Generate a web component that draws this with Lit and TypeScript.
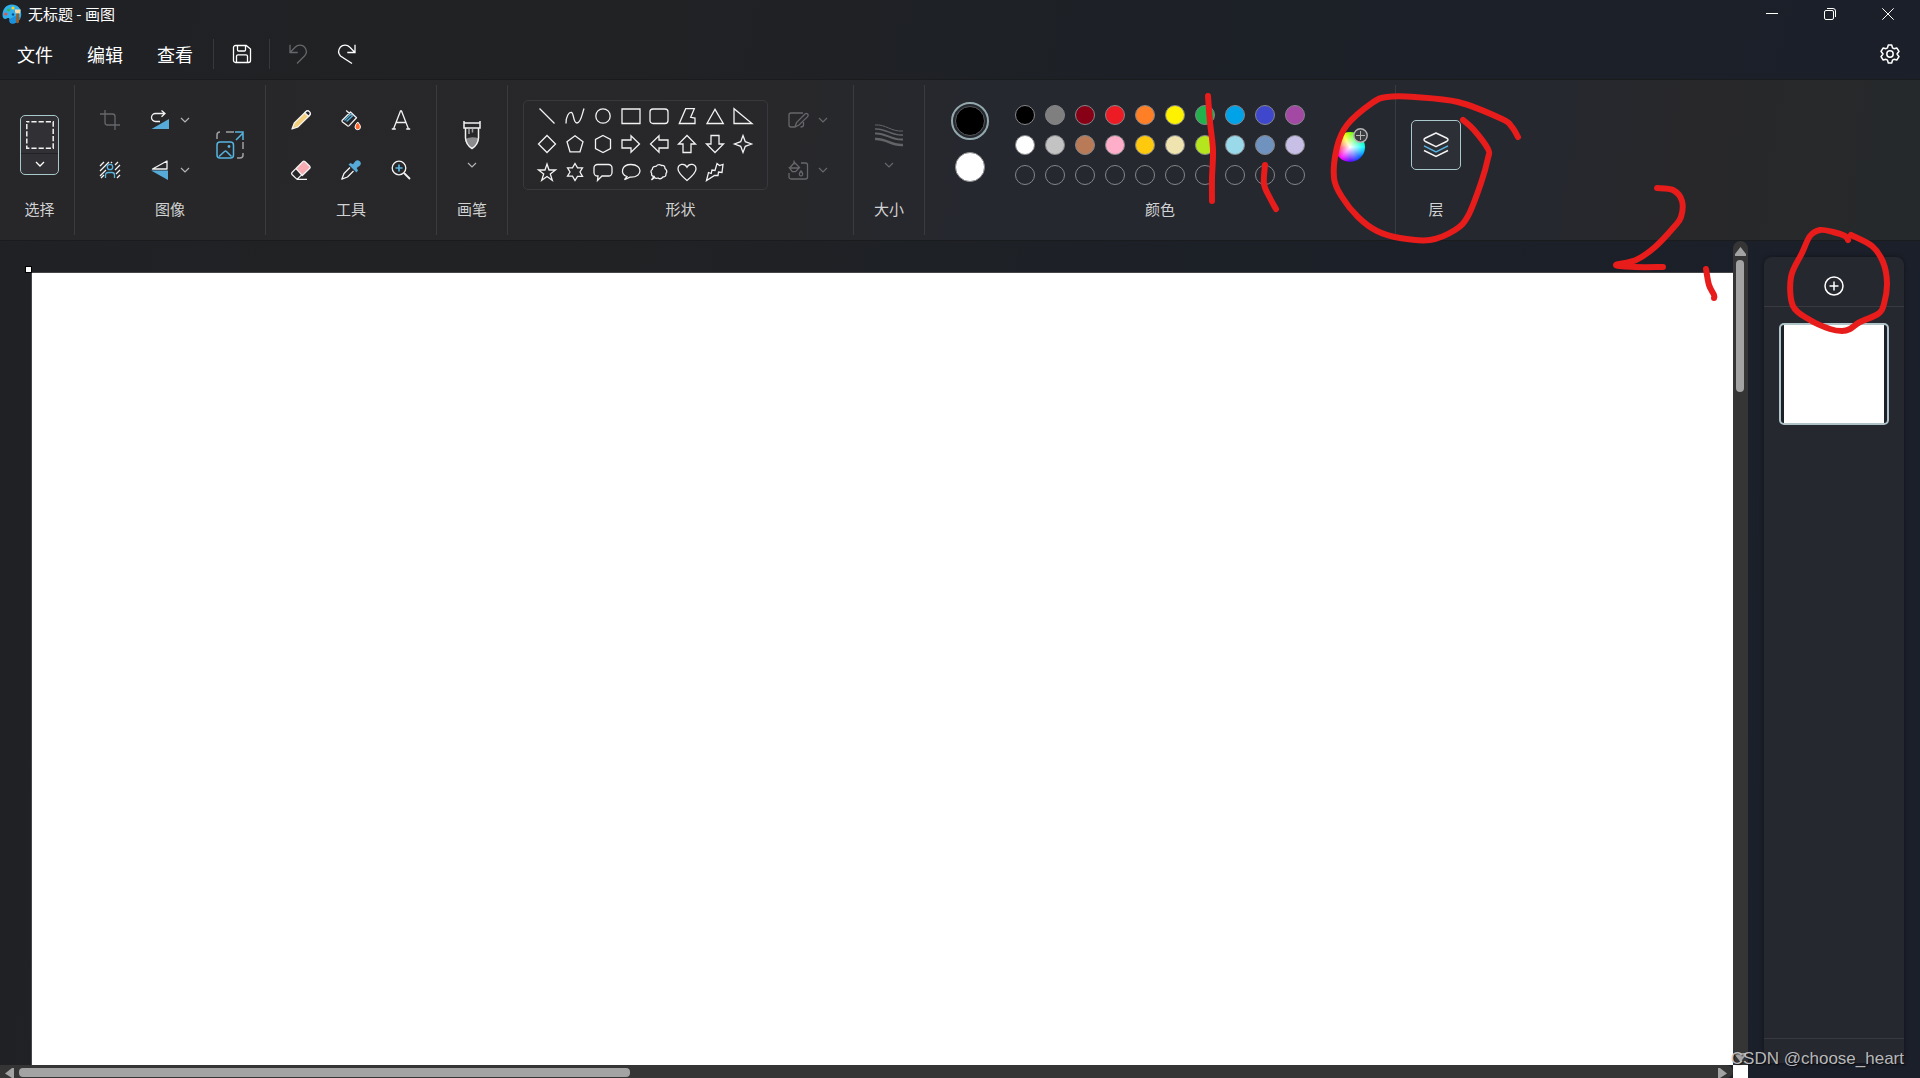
import { LitElement, html, svg, css, SVGTemplateResult } from "lit";
import { customElement } from "lit/decorators.js";
import { styleMap } from "lit/directives/style-map.js";

type Point = [number, number];

const ICONS: Record<string, SVGTemplateResult> = {
  save: svg`<path d="M4 1.5h10.200l4.300 3.500V16.500a2 2 0 0 1-2 2h-13a2 2 0 0 1-2-2V3.500a2 2 0 0 1 2-2zM5.500 1.800v4.200q0 1 1 1h6q1 0 1-1V1.800M4.500 18.300v-6q0-1.500 1.500-1.500h8q1.500 0 1.500 1.500v6"/>`,
  undo: svg`<path d="M2 .8v7.700h7.700M2.300 8.200l4.800-4.900a6.500 6.500 0 0 1 9.700 0q3.400 4.400-.3 8.700L9 19.500"/>`,
  redo: svg`<path d="M18 .8v7.700h-7.700M17.700 8.200l-4.800-4.900a6.500 6.500 0 0 0-9.700 0q-3.400 4.400.3 8.700L15 19.500"/>`,
  gear: svg`<path d="M8.300 1h3.400l.8 2.800 1.500.9 2.800-.7 2.200 3.300-2 2.700 2 2.700-2.200 3.300-2.800-.7-1.500.9-.8 2.800H8.300l-.8-2.800-1.500-.9-2.800.7L1 12.700 3 10 1 7.300 3.200 4l2.800.7 1.500-.9z" stroke-linejoin="round"/><circle cx="10" cy="10" r="3.200"/>`,
  crop: svg`<path d="M5 0v12.500a2.500 2.500 0 0 0 2.500 2.500H20M0 4h12.500A2.500 2.500 0 0 1 15 6.500V20"/>`,
  rotate: svg`<path d="M10 11.500H5.500a4 4 0 0 1 0-8h9M11.500.5l3.500 3-3.500 3.200"/><path class="blue-fill" d="M1.500 19L19 9v10z"/>`,
  removebg: svg`<path d="M0 6l4-4M0 11L9 2M0 16L6 10M1 18l3-3M11 3l1-1M15 5l3-3M15 10l5-5M16 14l4-4M17 18l3-3"/><circle class="blue" cx="10" cy="7" r="2.700"/><path class="blue" d="M5.500 18v-3a2.500 2.500 0 0 1 2.500-2.500h4a2.500 2.500 0 0 1 2.500 2.500v3"/>`,
  flip: svg`<path d="M2.500 9L17 1v8z" stroke-linejoin="round"/><path class="blue-fill" d="M1 10.500h17V20z"/>`,
  pencil: svg`<path fill="#f3cf7c" d="M1 19l2.300-6L14.500 2a2.700 2.700 0 0 1 3.800 3.800L7 16.900z" stroke-linejoin="round"/><path fill="#27272a" d="M13.800 2.700l1-1a2.500 2.500 0 0 1 3.700 3.600l-1 1z"/>`,
  bucket: svg`<path d="M1 10.500L9.500 2l6 5.800-7.300 7.800q-1 1-2 0L1.500 12q-.8-.8-.5-1.500zM5.200.5l5.300 4.700" stroke-linejoin="round"/><path class="blue" d="M3.500 10.500l7-7M5.500 11.500l6.500-6"/><path fill="#ff6a2f" stroke="#fff" stroke-width="1" d="M16.700 12q3 3.300 2.700 5a2.700 2.700 0 0 1-5.400 0q0-2 2.700-5z"/>`,
  text: svg`<path d="M2.500 19L9.500 1h1l7 18M5 12.500h10M.8 19h4M15.200 19h4"/>`,
  eraser: svg`<path fill="#f6acb2" d="M5 8.500l7-7q.8-.8 1.800 0l5 4.800q.8 1 0 1.900l-7.500 7.300z" stroke-linejoin="round"/><path d="M4.800 8.600L1 12.500q-.8 1 0 2l4 3.900q1 1 2 0l4.200-4M5.500 19.300h10.500" stroke-linejoin="round"/>`,
  dropper: svg`<path d="M9 7.500l-6 6-2.200 5.700L6.500 17l6-6" stroke-linejoin="round"/><path class="blue-fill" d="M7.500 4.500l2-1.500 2.500 1.300L14.500 1a3.200 3.200 0 0 1 4.500 4.500L15.700 8l1.300 2.500-1.500 2z"/>`,
  zoom: svg`<circle cx="8" cy="8" r="6.800"/><path d="M13 13l6 6" stroke-width="1.800"/><path class="blue" d="M8 4.500v7M4.500 8h7" stroke-width="1.700"/>`,
  outline: svg`<path d="M15 3H3a2 2 0 0 0-2 2v10a2 2 0 0 0 2 2h4l1.500-4.500L17 4a1.800 1.800 0 0 1 2.600 2.600L11 15l-4 2M12.500 17q3 0 3-2v-3"/>`,
  fill: svg`<path d="M13 3h4.500a2 2 0 0 1 2 2v12a2 2 0 0 1-2 2H3a2 2 0 0 1-2-2v-4M1.500 8L6.500 2.500l5 5-4 4.200H4.300L1.500 8h10M6 .5v4M13 11q2.200 2.500 1.500 4a1.700 1.700 0 0 1-3 0Q10.800 13.500 13 11z"/>`,
  plus: svg`<circle cx="10" cy="10" r="9"/><path d="M10 5.500v9M5.500 10h9"/>`,
  chevron: svg`<path d="M6 8l4 4 4-4"/>`,
};

const SHAPES: [string, SVGTemplateResult][] = [
  ["直线", svg`<path d="M2.500 2.500l15 15"/>`],
  ["曲线", svg`<path d="M1 17.500C1 10 4 6 6.500 6.500S8 17 12 17 17 8 19 2.500"/>`],
  ["椭圆形", svg`<circle cx="10" cy="10" r="7.200"/>`],
  ["矩形", svg`<path d="M1 3h18v14.500H1z"/>`],
  ["圆角矩形", svg`<rect x="1" y="3" width="18" height="14.500" rx="3"/>`],
  ["多边形", svg`<path d="M2.300 17.500L8.700 2.700h8.600l-3.600 8.600 4.300.7v5.500z"/>`],
  ["三角形", svg`<path d="M2 17.500l8-14.200 8.300 14.200z"/>`],
  ["直角三角形", svg`<path d="M1 2.700v14.800h18z"/>`],
  ["菱形", svg`<path d="M10 1.500l8.500 8.500-8.500 8.500L1.500 10z"/>`],
  ["五边形", svg`<path d="M10 1.800l8 6-3 10H5l-3-10z"/>`],
  ["六边形", svg`<path d="M10 1.500l7.500 4v9l-7.500 4-7.500-4v-9z"/>`],
  ["向右箭头", svg`<path d="M1 6h9V1.800l8.500 8.200-8.500 8.300V14H1z"/>`],
  ["向左箭头", svg`<path d="M19 6h-9V1.800L1.500 10l8.500 8.300V14h9z"/>`],
  ["向上箭头", svg`<path d="M6 18.500V10H1.500L10 1.500l8.500 8.500H14v8.500z"/>`],
  ["向下箭头", svg`<path d="M6 1.500V10H1.500l8.500 8.500 8.500-8.500H14V1.500z"/>`],
  ["四角星", svg`<path d="M10 1.500l2.300 6.200 6.200 2.300-6.200 2.300L10 18.500l-2.300-6.200L1.500 10l6.200-2.300z"/>`],
  ["五角星", svg`<path d="M10 2l2 6h6.500l-5.200 4 2 6.300L10 14.500l-5.300 3.800 2-6.300-5.200-4H8z"/>`],
  ["六角星", svg`<path d="M10 1.500l2.500 4.300h5L15 10l2.500 4.300h-5L10 18.500l-2.500-4.300h-5L5 10 2.500 5.800h5z"/>`],
  ["圆角标注", svg`<path d="M4.500 2.500h11a3.500 3.500 0 0 1 3.500 3.500v4.500a3.500 3.500 0 0 1-3.500 3.500H9l-4.500 4.500L5 14h-.5A3.500 3.500 0 0 1 1 10.500V6a3.500 3.500 0 0 1 3.500-3.500z"/>`],
  ["椭圆标注", svg`<path d="M6 14.500C-1 12 0 2.500 10 2.500c12 0 12 12.700 0 12.700H9l-5.500 2.500z"/>`],
  ["云形标注", svg`<path d="M5 14.500q-3-.5-2.300-3Q1 9 3.300 7.500 3.500 4 7 4.300q2.500-3 5.500-.8 3.500-.5 3.500 3 3 2.500 1 5 .3 3.500-3 3.500-2.500 3-5 1-2 1-3.500-.5l-3 2.500z"/>`],
  ["心形", svg`<path d="M10 18.500C4 13.500 1 10.500 1 7c0-5 6.500-6.500 9-1.800C12.500.5 19 2 19 7c0 3.500-3 6.500-9 11.500z"/>`],
  ["闪电", svg`<path d="M12 1.500l2.500 2 3.500-1-1 8-3.500-.5-.5 3.500-3.500 0L1.500 18.500l2-8 2.700 1L7 8l3 .5z"/>`],
];

const PALETTE: string[][] = [
  ["#000000", "#7f7f7f", "#880015", "#ed1c24", "#ff7f27", "#fff200", "#22b14c", "#00a2e8", "#3f48cc", "#a349a4"],
  ["#ffffff", "#c3c3c3", "#b97a57", "#ffaec9", "#ffc90e", "#efe4b0", "#b5e61d", "#99d9ea", "#7092be", "#c8bfe7"],
  Array(10).fill("transparent"),
];

const STROKES: Point[][] = [
  [[1208, 96], [1210, 122], [1213, 150], [1212, 178], [1212, 201]],
  [[1265, 165], [1264, 184], [1270, 198], [1276, 209]],
  [[1463, 120], [1474, 130], [1488, 149], [1488, 158], [1481, 183], [1468, 216], [1455, 230], [1430, 240], [1400, 238], [1377, 231], [1358, 217], [1342, 197], [1334, 178], [1337, 147], [1347, 125], [1372, 103], [1387, 97], [1415, 97], [1458, 102], [1502, 119], [1512, 127], [1518, 137]],
  [[1657, 188], [1673, 190], [1682, 201], [1681, 217], [1674, 227], [1655, 247], [1636, 260], [1616, 265], [1635, 267], [1663, 267]],
  [[1706, 269], [1709, 285], [1714, 295], [1714, 298]],
  [[1848, 240], [1845, 236], [1833, 232], [1820, 230], [1810, 236], [1802, 253], [1791, 277], [1793, 306], [1810, 320], [1830, 329], [1842, 331], [1850, 329], [1860, 322], [1878, 314], [1884, 304], [1887, 283], [1883, 262], [1872, 246], [1851, 235]],
];

/** Runs a smooth cubic curve through the recorded pen points. */
function penPath(p: Point[]): string {
  let d = `M${p[0].join(" ")}`;
  for (let i = 0; i < p.length - 1; i++) {
    const a = p[i - 1] ?? p[i];
    const b = p[i];
    const c = p[i + 1];
    const e = p[i + 2] ?? c;
    d += `C${b[0] + (c[0] - a[0]) / 6} ${b[1] + (c[1] - a[1]) / 6} ${c[0] - (e[0] - b[0]) / 6} ${c[1] - (e[1] - b[1]) / 6} ${c[0]} ${c[1]}`;
  }
  return d;
}

const icon = (body: SVGTemplateResult) => html`<svg class="icon" viewBox="0 0 20 20" aria-hidden="true">${body}</svg>`;
const tool = (name: string, label: string, extra = "") =>
  html`<button class="tool ${extra}" aria-label=${label}>${icon(ICONS[name])}</button>`;
const chevron = (label: string, extra = "") =>
  html`<button class="chevron ${extra}" aria-label=${label}>${icon(ICONS.chevron)}</button>`;

const shared = css`
  * { box-sizing: border-box; }
  button {
    display: flex; align-items: center; justify-content: center;
    padding: 0; border: 0; background: none; color: inherit; font: inherit;
  }
  .icon {
    width: 20px; height: 20px; display: block; flex: none; overflow: visible;
    fill: none; stroke: currentColor; stroke-width: 1.3;
  }
  .blue { stroke: #56b4e0; }
  .blue-fill { fill: #56abd8; stroke: none; }
`;

@customElement("paint-header")
export class PaintHeader extends LitElement {
  static styles = [shared, css`
    :host { display: block; color: #fff; }
    .title { display: flex; align-items: center; height: 28px; padding: 0 3px 0 2px; }
    .logo { width: 20px; height: 20px; }
    .name { flex: 1; margin: 0; padding-left: 6px; font-size: 15px; font-weight: 400; line-height: 28px; }
    .win { width: 58px; height: 28px; }
    .win svg { width: 12px; height: 12px; fill: none; stroke: #fff; stroke-width: 1; }
    .bar { display: flex; align-items: center; height: 52px; padding: 1px 20px 0 0; border-bottom: 1px solid #1a1b1d; }
    .menu { width: 70px; height: 40px; font-size: 18px; }
    .menus { display: flex; padding-right: 3px; }
    .sep { width: 1px; height: 30px; background: #37383b; }
    .quick { width: 55px; height: 40px; }
    .history { display: flex; padding-left: 3px; }
    .act { width: 49px; height: 40px; }
    .off { color: #66676a; }
    .spacer { flex: 1; }
    .gear { width: 20px; height: 20px; }
    .gear .icon { stroke-width: 1.5; }
  `];

  render() {
    return html`
      <div class="title">
        <svg class="logo" viewBox="0 0 20 20" aria-hidden="true">
          <path fill="#2fb0ea" d="M10 .5C3.500.5 0 6 .6 12c.2 3 2.600 3.500 4.200 2.500 1.800-1 3-.5 2.700 1.500-.4 2.500.8 3.600 3 3.500C16 19 19.500 15 19.200 9.500 19 4 15.500.5 10 .5z"/>
          <path fill="#1c8fdd" d="M7.500 15c.3 3 .5 4.500 3 4.500 3 0 6.500-2 8-6L13 12z"/>
          <circle cx="11" cy="4" r="1.500" fill="#ffd21c"/><circle cx="6.500" cy="6" r="1.500" fill="#3bb54a"/>
          <circle cx="3.800" cy="10" r="1.500" fill="#f0503c"/><circle cx="11" cy="10.500" r="1.200" fill="#0b4d92"/>
          <path fill="#f7d9a8" d="M12.700 5.500h6l-.8 4h-4.400z"/><path fill="#9c5a1e" d="M14.200 9.500h2.800V18q-1.400 2.500-2.800 0z"/>
        </svg>
        <h1 class="name">无标题 - 画图</h1>
        <button class="win" aria-label="最小化"><svg viewBox="0 0 12 12"><path d="M0 5.500h12"/></svg></button>
        <button class="win" aria-label="还原"><svg viewBox="0 0 12 12"><rect x=".5" y="2.500" width="9" height="9" rx="1.500"/><path d="M3 .5h6q2.500 0 2.500 2.500v6"/></svg></button>
        <button class="win" aria-label="关闭"><svg viewBox="0 0 12 12"><path d="M.3.3l11.400 11.400M11.700.3L.3 11.700"/></svg></button>
      </div>
      <div class="bar">
        <nav class="menus">${["文件", "编辑", "查看"].map((m) => html`<button class="menu">${m}</button>`)}</nav>
        <span class="sep"></span>
        <button class="quick" aria-label="保存">${icon(ICONS.save)}</button>
        <span class="sep"></span>
        <div class="history">
          <button class="act off" aria-label="撤消">${icon(ICONS.undo)}</button>
          <button class="act" aria-label="重做">${icon(ICONS.redo)}</button>
        </div>
        <span class="spacer"></span>
        <button class="gear" aria-label="设置">${icon(ICONS.gear)}</button>
      </div>`;
  }
}

@customElement("paint-ribbon")
export class PaintRibbon extends LitElement {
  static styles = [shared, css`
    :host {
      display: flex; padding: 5px 0; color: #f2f2f2; border-bottom: 1px solid #1a1b1d;
      background: linear-gradient(97deg, #272729 0%, #28282a 40%, #25282f 52%, #25282f 80%, #28282a 88%, #26292b 98%);
    }
    .group {
      display: flex; flex-direction: column; height: 150px; padding: 10px 20px 0;
      border-right: 1px solid #3a3b3e;
    }
    .group.last { border-right: 0; padding: 10px 15px 0; }
    .group.pick { padding: 10px 15px 0 20px; }
    .group.image, .group.shapes { width: 191px; padding: 10px 15px 0; }
    .group.shapes { width: 346px; }
    .image .body { justify-content: flex-end; }
    .shapes .body { justify-content: flex-start; }
    .group.stacked { padding: 10px 15px 0; }
    .group.colors { padding: 10px 25px 0; }
    .body { display: flex; align-items: center; justify-content: center; height: 100px; }
    .label {
      margin: 4px 0 0; text-align: center; font-size: 15px; font-weight: 400;
      line-height: 20px; color: #d2d2d3;
    }
    .tool { width: 30px; height: 30px; }
    .chevron { width: 20px; height: 30px; color: #b4b4b6; }
    .chevron .icon { stroke-width: 1.2; }
    .off { color: #66676b; }
    .grid { display: grid; row-gap: 20px; column-gap: 20px; }
    .three { grid-template-columns: repeat(3, 30px); }
    .pairs { grid-template-columns: 30px 50px; }
    .split { display: flex; }
    .resize { width: 40px; height: 40px; margin-left: 15px; }
    .big { width: 40px; height: 40px; }
    .large { width: 28px; height: 28px; fill: none; stroke: #f2f2f2; stroke-width: 1.5; overflow: visible; }
    .select {
      display: grid; grid-template-rows: 37px 21px; width: 39px; border: 1px solid #a9c8cc;
      border-radius: 5px; background: #303035; overflow: hidden;
    }
    .select .drop { border-top: 1px solid #222225; width: 37px; height: 21px; color: #fff; }
    .select .half { width: 37px; }
    .column { display: flex; flex-direction: column; align-items: center; width: 40px; }
    .column .chevron { height: 20px; }
    .gallery {
      display: grid; grid-template-columns: repeat(8, 28px); padding: 1px 10px 3px 9px;
      border: 1px solid #38393c; border-radius: 5px;
    }
    .shape { width: 28px; height: 28px; }
    .styles { display: grid; row-gap: 20px; margin-left: 15px; }
    .current { display: flex; flex-direction: column; align-items: center; gap: 12px; width: 40px; padding-bottom: 6px; }
    .primary { width: 38px; height: 38px; border: 2px solid #93a9ae; border-radius: 50%; }
    .primary .dot { width: 30px; height: 30px; border-radius: 50%; background: #000; border: 1px solid #56585c; }
    .secondary { width: 30px; height: 30px; border-radius: 50%; background: #fff; border: 1px solid #8a8b8e; }
    .palette { display: grid; grid-template-columns: repeat(10, 30px); margin: 0 20px; }
    .cell { width: 30px; height: 30px; }
    .swatch { width: 20px; height: 20px; border-radius: 50%; border: 1px solid #85868a; }
    .picker { position: relative; width: 40px; height: 40px; }
    .wheel {
      width: 30px; height: 30px; margin-top: 4px; border-radius: 50%;
      background: radial-gradient(circle, #fff 0%, rgba(255,255,255,0) 70%),
        conic-gradient(#8cff00, #00ff6a 50deg, #00ffff 90deg, #0060ff 135deg, #5a00ff 180deg, #ff00ff 220deg, #ff0040 265deg, #ff8c00 300deg, #ffff00 330deg, #8cff00);
    }
    .badge { position: absolute; right: 2px; top: 3px; width: 15px; height: 15px; }
    .layers { width: 50px; height: 50px; border: 1px solid #a9c8cc; border-radius: 5px; background: #2d2f37; }
  `];

  render() {
    return html`
      <section class="group pick">
        <div class="body">
          <div class="select">
            <button class="half" aria-label="矩形选择"><svg class="large" viewBox="0 0 28 28"><rect x=".8" y=".8" width="26.400" height="26.400" stroke-dasharray="5.200 2" stroke-dashoffset="2.600"/></svg></button>
            <button class="drop" aria-label="选择选项">${icon(ICONS.chevron)}</button>
          </div>
        </div>
        <h2 class="label">选择</h2>
      </section>
      <section class="group image">
        <div class="body">
          <div class="grid pairs">
            ${tool("crop", "裁剪", "off")}
            <div class="split">${tool("rotate", "旋转")}${chevron("旋转选项")}</div>
            ${tool("removebg", "删除背景")}
            <div class="split">${tool("flip", "翻转")}${chevron("翻转选项")}</div>
          </div>
          <button class="resize" aria-label="调整大小">
            <svg class="large" viewBox="0 0 28 28">
              <path stroke="#a0a0a2" d="M1 8V4q0-3 3-3M10 1h8M27 11v7M21 27h3q3 0 3-3v-2"/>
              <g stroke="#56b4e0"><rect x="1" y="11" width="16.500" height="16" rx="3"/><path d="M3 25.500l5.500-5q1-.8 2 0l5 5M20 9l6.500-6.500M19 1h8v8"/></g>
              <circle cx="13" cy="15.500" r="1.400" fill="#56b4e0" stroke="none"/>
            </svg>
          </button>
        </div>
        <h2 class="label">图像</h2>
      </section>
      <section class="group">
        <div class="body">
          <div class="grid three">
            ${tool("pencil", "铅笔")}${tool("bucket", "填充")}${tool("text", "文本")}
            ${tool("eraser", "橡皮擦")}${tool("dropper", "颜色选取器")}${tool("zoom", "放大镜")}
          </div>
        </div>
        <h2 class="label">工具</h2>
      </section>
      <section class="group stacked">
        <div class="body">
          <div class="column">
            <button class="big" aria-label="画笔">
              <svg class="large" viewBox="0 0 28 28">
                <path fill="#8b8b8d" stroke="none" d="M7 18q7-3 14-.5Q20 24 14 27 8 24 7 18z"/>
                <path d="M6 0v7h16V0M6 2h16M7.500 7v10Q8 24 14 27.500 20 24 20.500 17V7"/>
                <path stroke="#a0a0a2" d="M11 8v5M14.500 8v3.500"/>
              </svg>
            </button>
            ${chevron("画笔选项")}
          </div>
        </div>
        <h2 class="label">画笔</h2>
      </section>
      <section class="group shapes">
        <div class="body">
          <div class="gallery">
            ${SHAPES.map(([name, body]) => html`<button class="shape" aria-label=${name}>${icon(body)}</button>`)}
          </div>
          <div class="styles">
            <div class="split">${tool("outline", "轮廓", "off")}${chevron("轮廓选项", "off")}</div>
            <div class="split">${tool("fill", "填充样式", "off")}${chevron("填充选项", "off")}</div>
          </div>
        </div>
        <h2 class="label">形状</h2>
      </section>
      <section class="group stacked">
        <div class="body">
          <div class="column">
            <button class="big" aria-label="大小">
              <svg class="large" viewBox="0 0 28 28">
                <g stroke="#626468"><path stroke-width="1" d="M0 4c11-1 16 7 28 6"/><path stroke-width="1.400" d="M0 8c11-1 16 7 28 6"/><path stroke-width="1.900" d="M0 12.500c11-1 16 7 28 6"/><path stroke-width="2.500" d="M0 18c11-1 16 7 28 6"/></g>
              </svg>
            </button>
            ${chevron("大小选项", "off")}
          </div>
        </div>
        <h2 class="label">大小</h2>
      </section>
      <section class="group colors">
        <div class="body">
          <div class="current">
            <button class="primary" aria-label="颜色 1"><span class="dot"></span></button>
            <button class="secondary" aria-label="颜色 2"></button>
          </div>
          <div class="palette">
            ${PALETTE.flat().map((c) => html`<button class="cell" aria-label="颜色"><span class="swatch" style=${styleMap({ background: c })}></span></button>`)}
          </div>
          <button class="picker" aria-label="编辑颜色">
            <span class="wheel"></span>
            <svg class="badge" viewBox="0 0 15 15"><circle cx="7.500" cy="7.500" r="6.700" fill="#3c3d40" stroke="#b5b5b5" stroke-width="1.400"/><path d="M7.500 3v9M3 7.500h9" stroke="#b5b5b5"/></svg>
          </button>
        </div>
        <h2 class="label">颜色</h2>
      </section>
      <section class="group last">
        <div class="body">
          <button class="layers" aria-label="层">
            <svg class="large" viewBox="0 0 28 28">
              <path stroke-linejoin="round" d="M14 2l10.500 5q1.500.8 1.500 1.800T24.500 10.500L14 15.700 3.500 10.500Q2 9.800 2 8.800T3.500 7z"/>
              <path stroke="#56b4e0" d="M2 14.800l12 6 12-6"/><path d="M2 19.500l12 6 12-6"/>
            </svg>
          </button>
        </div>
        <h2 class="label">层</h2>
      </section>`;
  }
}

@customElement("paint-workspace")
export class PaintWorkspace extends LitElement {
  static styles = [shared, css`
    :host { display: grid; grid-template-columns: 1fr 15px 172px; grid-template-rows: minmax(0, 1fr) 13px; min-height: 0; }
    .stage { display: flex; padding: 31px 0 0 31px; min-width: 0; }
    .canvas { position: relative; flex: 1; background: #fff; border-left: 1px solid #45464a; border-top: 1px solid #45464a; }
    .handle { position: absolute; left: -7px; top: -7px; width: 7px; height: 7px; background: #fff; border: 1px solid #000; }
    .vbar { display: flex; flex-direction: column; align-items: center; padding: 6px 0 3px; background: #353535; border-radius: 8px 8px 0 0; }
    .hbar { display: flex; align-items: center; padding: 2px 5px 0; background: #353535; border-radius: 0 8px 8px 0; overflow: hidden; }
    .arrow { width: 11px; height: 10px; fill: #a3a3a3; flex: none; }
    .vtrack { flex: 1; display: flex; justify-content: center; width: 15px; padding: 3px 1px 0 0; }
    .vthumb { width: 8px; height: 17%; max-height: 132px; border-radius: 4px; background: #a3a3a3; }
    .htrack { flex: 1; padding: 0 0 0 3px; }
    .hthumb { width: 36%; height: 9px; border-radius: 4px; background: #a3a3a3; }
    .corner { background: #fff; }
    .side { grid-column: 3; grid-row: 1 / span 2; display: flex; padding: 16px 16px 15px; }
    .panel { flex: 1; display: flex; flex-direction: column; background: #25282f; border-radius: 8px 8px 0 0; box-shadow: 0 0 4px rgba(0, 0, 0, 0.4); }
    .head { display: flex; align-items: center; justify-content: center; height: 50px; padding-top: 9px; border-bottom: 1px solid #383a3f; color: #fff; }
    .head .icon { stroke-width: 1.5; }
    .list { flex: 1; display: flex; flex-direction: column; align-items: center; padding: 16px 15px; }
    .layer { width: 110px; height: 102px; border: 2px solid #afc3c9; border-radius: 5px; background: #1c2029; }
    .thumb { width: 100px; height: 98px; background: #fff; }
    .foot { height: 25px; border-top: 1px solid #383a3f; }
  `];

  render() {
    return html`
      <main class="stage"><div class="canvas"><span class="handle"></span></div></main>
      <div class="vbar">
        <svg class="arrow" viewBox="0 0 11 10"><path d="M5.500 0L11 7v2H0V7z"/></svg>
        <div class="vtrack"><div class="vthumb"></div></div>
        <svg class="arrow" viewBox="0 0 11 10"><path d="M5.500 10L11 3V1H0v2z"/></svg>
      </div>
      <aside class="side">
        <div class="panel">
          <div class="head"><button aria-label="新建图层">${icon(ICONS.plus)}</button></div>
          <div class="list"><button class="layer" aria-label="图层 1"><span class="thumb"></span></button></div>
          <div class="foot"></div>
        </div>
      </aside>
      <div class="hbar">
        <svg class="arrow" viewBox="0 0 11 10"><path d="M0 5.500L7 0h2v10H7z"/></svg>
        <div class="htrack"><div class="hthumb"></div></div>
        <svg class="arrow" viewBox="0 0 11 10"><path d="M10 5.500L3 0H1v10h2z"/></svg>
      </div>
      <div class="corner"></div>`;
  }
}

@customElement("app-root")
export class AppRoot extends LitElement {
  static styles = [shared, css`
    :host {
      position: relative; display: grid; grid-template-rows: auto auto minmax(0, 1fr); height: 100vh; overflow: hidden;
      font-family: "Noto Sans CJK SC", sans-serif;
      background: linear-gradient(100deg, #202125 0%, #212223 25%, #1c2027 60%, #1b1f2a 100%);
    }
    .ink { position: absolute; left: 0; top: 0; width: 100%; height: 100%; fill: none; stroke: #e71c1b; stroke-width: 6; stroke-linecap: round; stroke-linejoin: round; pointer-events: none; }
    .mark {
      position: absolute; right: 16px; bottom: 7px; margin: 0; font: 17px/24px "Liberation Sans", sans-serif;
      color: rgba(205, 205, 208, 0.9); text-shadow: 1px 1px 1px rgba(0, 0, 0, 0.6);
    }
  `];

  render() {
    return html`
      <paint-header></paint-header>
      <paint-ribbon></paint-ribbon>
      <paint-workspace></paint-workspace>
      <svg class="ink" aria-hidden="true">${STROKES.map((s) => svg`<path d=${penPath(s)}/>`)}</svg>
      <p class="mark">CSDN @choose_heart</p>`;
  }
}
